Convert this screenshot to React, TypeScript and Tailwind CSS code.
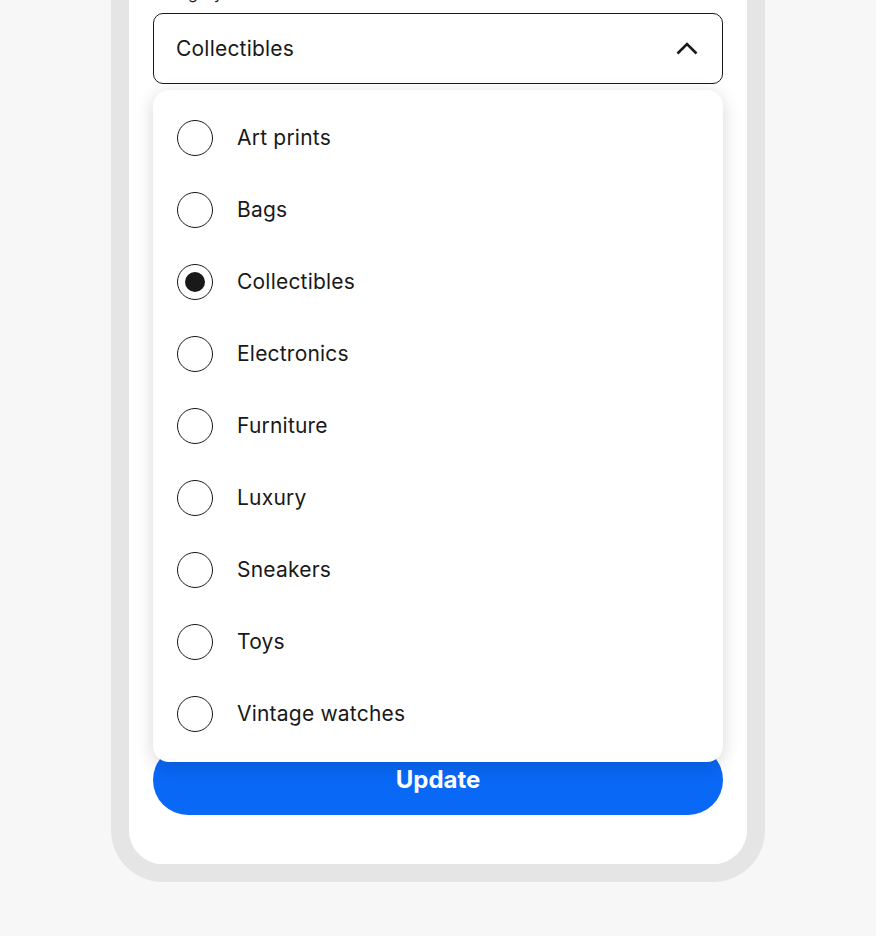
import { useState } from "react";

const categories = [
  "Art prints",
  "Bags",
  "Collectibles",
  "Electronics",
  "Furniture",
  "Luxury",
  "Sneakers",
  "Toys",
  "Vintage watches",
];

function Radio({ checked }: { checked: boolean }) {
  return (
    <span className="w-9 h-9 shrink-0 rounded-full border-[1.5px] border-[#191919] flex items-center justify-center">
      {checked && <span className="w-5 h-5 rounded-full bg-[#191919]" />}
    </span>
  );
}

export default function App() {
  const [selected, setSelected] = useState("Collectibles");

  return (
    <div
      className="w-[876px] h-[936px] overflow-hidden bg-[#f7f7f7] flex justify-center text-[#191919]"
      style={{ fontFamily: "Inter, 'Noto Sans', sans-serif" }}
    >
      <div className="w-[654px] h-[901px] -mt-[19px] border-x-[18px] border-b-[18px] border-[#e5e5e5] rounded-b-[52px] bg-white">
        <div className="h-full px-6 flex flex-col rounded-b-[34px] bg-white">
          {/* Label */}
          <label className="block text-base leading-6">Category</label>

          {/* Select + menu */}
          <div className="relative mt-2">
            <button className="w-full h-[71px] pl-[22px] pr-[24px] flex items-center justify-between border-[1.5px] border-[#191919] rounded-[10px] bg-white">
              <span className="text-[21px] tracking-[0.01em]">{selected}</span>
              <svg width="22" height="13" viewBox="0 0 22 13" fill="none">
                <path d="M1.5 11.5 11 2l9.5 9.5" stroke="#191919" strokeWidth="2.6" />
              </svg>
            </button>

            <ul className="absolute left-0 right-0 top-[77px] z-10 py-3 bg-white rounded-2xl shadow-[0_4px_18px_rgba(0,0,0,0.16)]">
              {categories.map((c) => (
                <li
                  key={c}
                  onClick={() => setSelected(c)}
                  className="h-[72px] px-6 flex items-center gap-6 cursor-pointer"
                >
                  <Radio checked={c === selected} />
                  <span className="text-[21px] tracking-[0.01em]">{c}</span>
                </li>
              ))}
            </ul>
          </div>

          {/* Update button */}
          <button className="mt-[661px] h-[70px] w-full rounded-full bg-[#0968f6] text-white text-[24px] font-bold">
            Update
          </button>
        </div>
      </div>
    </div>
  );
}
